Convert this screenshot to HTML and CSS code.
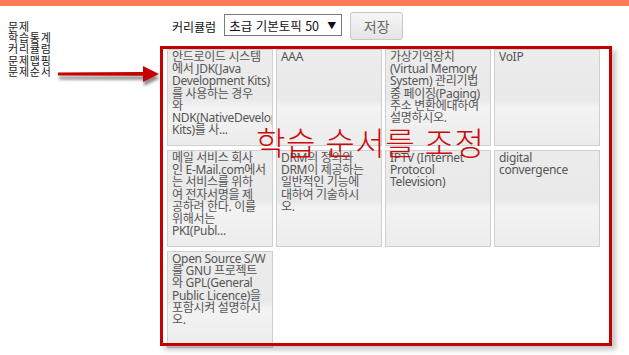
FILE: index.html
```html
<!doctype html>
<html lang="ko">
	<head>
		<title>문제순서</title>
		<meta charset="utf-8">
		<link rel="stylesheet" href="styles.css">
	</head>
<body>

	<div class="topbar"></div>

	<div class="layout">

		<ul class="side-menu">
			<li>문제</li>
			<li>학습통계</li>
			<li>커리큘럼</li>
			<li>문제맵핑</li>
			<li>문제순서</li>
		</ul>

		<div class="main">

			<div class="toolbar">
				<span class="toolbar-label">커리큘럼</span>
				<div class="select-box">
					<span>초급 기본토픽 50</span>
					<span class="caret">&#9660;</span>
				</div>
				<button class="btn">저장</button>
			</div>

			<div class="tiles">
				<div class="tile">안드로이드 시스템<br>에서 JDK(Java<br>Development Kits)<br>를 사용하는 경우<br>와<br>NDK(NativeDevelopment<br>Kits)를 사...</div>
				<div class="tile">AAA</div>
				<div class="tile">가상기억장치<br>(Virtual Memory<br>System) 관리기법<br>중 페이징(Paging)<br>주소 변환에대하여<br>설명하시오.</div>
				<div class="tile">VoIP</div>
				<div class="tile">메일 서비스 회사<br>인 E-Mail.com에서<br>는 서비스를 위하<br>여 전자서명을 제<br>공하려 한다. 이를<br>위해서는<br>PKI(Publ...</div>
				<div class="tile">DRM의 정의와<br>DRM이 제공하는<br>일반적인 기능에<br>대하여 기술하시<br>오.</div>
				<div class="tile">IPTV (Internet<br>Protocol<br>Television)</div>
				<div class="tile">digital<br>convergence</div>
				<div class="tile">Open Source S/W<br>를 GNU 프로젝트<br>와 GPL(General<br>Public Licence)을<br>포함시켜 설명하시<br>오.</div>
			</div>

		</div>

	</div>

	<!-- annotation -->

	<div class="note-box"></div>
	<div class="note-text">학습 순서를 조정</div>

	<svg class="note-arrow" width="112" height="30" viewBox="0 0 112 30">
		<defs>
			<filter id="arrow_shadow" x="-10%" y="-50%" width="130%" height="220%">
				<feDropShadow dx="1" dy="4" stdDeviation="1.6" flood-color="#000" flood-opacity="0.45"/>
			</filter>
		</defs>
		<polygon filter="url(#arrow_shadow)" fill="#c40000" points="3,10.6 88,10 88,4 104,12 88,20 88,13.8 3,13.4"/>
	</svg>

</body>
</html>
```

FILE: styles.css
```css
body { margin: 0; background: #ffffff; font-family: "Noto Sans", "Noto Sans CJK KR", sans-serif; color: #333; }

.topbar { height: 6px; background: #ff7b56; }

.layout { display: flex; }

.side-menu { list-style: none; margin: 0; padding: 15px 0 0 8px; width: 159px; font-family: "Noto Sans CJK KR", sans-serif; font-size: 11px; line-height: 11.2px; letter-spacing: 0.8px; color: #1a1a1a; }

.main { flex: 1; }

.toolbar { display: flex; align-items: center; gap: 8px; height: 28px; margin-top: 6px; padding-left: 5px; }
.toolbar-label { font-family: "Noto Sans CJK KR", sans-serif; font-size: 12px; color: #111; }

.select-box {
  display: flex;
  align-items: center;
  justify-content: space-between;
  box-sizing: border-box;
  width: 118px;
  height: 22px;
  margin-top: -2px;
  padding: 0 5px 0 4px;
  border: 1px solid #7a7a7a;
  background: #fff;
  font-family: "Noto Sans CJK KR", sans-serif;
  font-size: 12.5px;
  color: #111;
}
.select-box .caret { font-size: 9px; color: #111; }

.btn {
  box-sizing: border-box;
  width: 53px;
  height: 28px;
  border: 1px solid #c8c8c8;
  border-radius: 3px;
  background: linear-gradient(#f6f6f6, #e4e4e4);
  font-family: "Noto Sans CJK KR", sans-serif;
  font-size: 14px;
  color: #666;
  padding: 0;
}

.tiles { display: grid; grid-template-columns: repeat(4, 106px); grid-auto-rows: 97px; column-gap: 3px; row-gap: 4px; margin-top: 9px; }

.tile {
  box-sizing: border-box;
  overflow: hidden;
  white-space: nowrap;
  padding: 1px 2px 0 4px;
  border: 1px solid #cfcfcf;
  background: linear-gradient(#ececec 0%, #e9e9e9 52%, #f3f3f3 60%, #ececec 100%);
  font-size: 12px;
  line-height: 12.2px;
  letter-spacing: -0.3px;
  color: #555;
}

/* annotation overlay */

.note-box { position: absolute; left: 160px; top: 46px; width: 452px; height: 300px; box-sizing: border-box; border: 3px solid #c40000; box-shadow: 4px 4px 5px rgba(0,0,0,0.22); }

.note-text { position: absolute; left: 256px; top: 125px; font-family: "Noto Sans CJK KR", sans-serif; font-weight: 300; font-size: 32px; line-height: 32px; letter-spacing: 0.5px; color: #cc0a0a; white-space: nowrap; }

.note-arrow { position: absolute; left: 55px; top: 62px; }
```
